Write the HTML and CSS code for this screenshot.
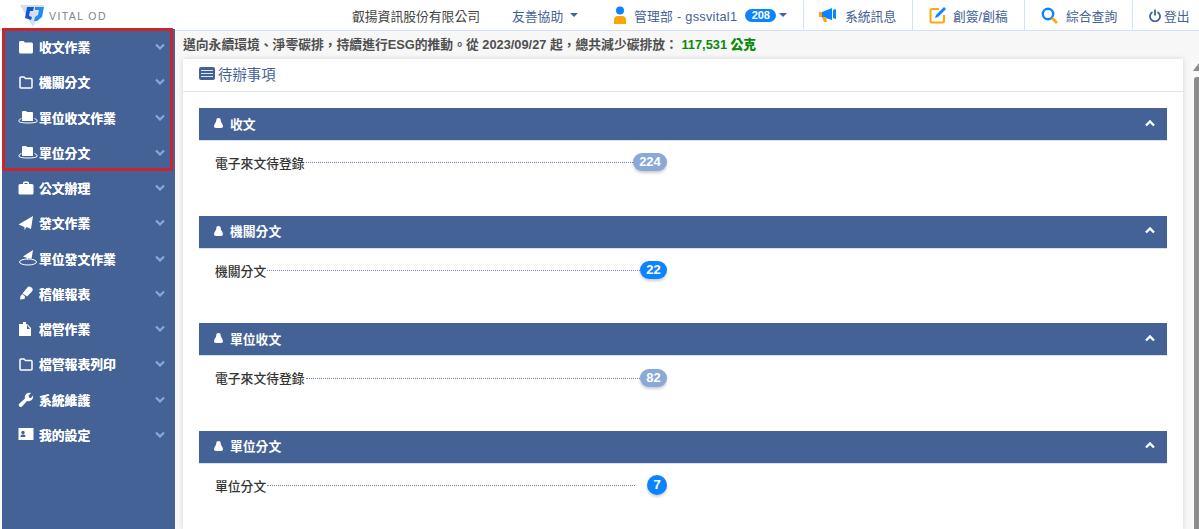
FILE: index.html
```html
<!DOCTYPE html>
<html lang="zh-Hant">
<head>
<meta charset="utf-8">
<title>待辦事項</title>
<link rel="stylesheet" href="styles.css">
</head>
<body>
<header class="top">
  <div class="logo">
    <svg class="logo-mark" width="26" height="26" viewBox="0 0 26 26"><path d="M0 4h24L13 26z" fill="#d8deea"/><path d="M7 6h7l-1 4h-3l-1 5 3 1-1 3-6-2z" fill="#1357d6"/><path d="M15 6h9l-2 10-5 4h-3l1-4 3-2 1-5h-4z" fill="#1f8df0"/></svg>
    <span class="logo-text">VITAL OD</span>
  </div>
  <nav class="top-nav">
    <span class="company">叡揚資訊股份有限公司</span>
    <span class="friendly">友善協助<i class="caret"></i></span>
    <span class="user">
      <svg width="14" height="18" viewBox="0 0 14 18"><circle cx="7" cy="4.500" r="4" fill="#0d84ff"/><path d="M1 18v-4a4 4 0 0 1 4-4h4a4 4 0 0 1 4 4v4z" fill="#ffa50a"/></svg>
      <span class="user-name">管理部 - gssvital1</span>
      <b class="user-count">208</b><i class="caret"></i>
    </span>
    <span class="tool t-msg">
      <svg width="18" height="16" viewBox="0 0 18 16"><path d="M0 5h3v5H0z" fill="#ffa50a"/><path d="M3 5l10-4v12L3 10z" fill="#0d84ff"/><path d="M3 10h4l1 5H5z" fill="#ffa50a"/><path d="M14 3l3-1v10l-3-1z" fill="#0d84ff"/></svg>
      系統訊息
    </span>
    <span class="tool t-edit">
      <svg width="18" height="18" viewBox="0 0 18 18"><path d="M10 3H3a1.500 1.500 0 0 0-1.500 1.500V15A1.500 1.500 0 0 0 3 16.500h10.500A1.500 1.500 0 0 0 15 15V9" fill="none" stroke="#ffa50a" stroke-width="2"/><path d="M6 12l1-3 8-8 2 2-8 8z" fill="#0d84ff"/></svg>
      創簽/創稿
    </span>
    <span class="tool t-search">
      <svg width="17" height="17" viewBox="0 0 17 17"><circle cx="7" cy="7" r="5.200" fill="none" stroke="#0d84ff" stroke-width="2.400"/><path d="M11 11l5 5" stroke="#ffa50a" stroke-width="2.600"/></svg>
      綜合查詢
    </span>
    <span class="tool t-out">
      <svg width="12" height="13" viewBox="0 0 12 13"><path d="M3.500 3a5 5 0 1 0 5 0" fill="none" stroke="#456297" stroke-width="1.800"/><path d="M6 0.500v6" stroke="#456297" stroke-width="1.800"/></svg>
      登出
    </span>
  </nav>
</header>
<div class="body">
  <aside class="side">
    <a class="side-item"><svg class="ic" viewBox="0 0 16 16"><use href="#folder"/></svg><span>收文作業</span><svg class="chev" viewBox="0 0 10 7"><use href="#down"/></svg></a>
    <a class="side-item"><svg class="ic" viewBox="0 0 16 16"><use href="#folder-o"/></svg><span>機關分文</span><svg class="chev" viewBox="0 0 10 7"><use href="#down"/></svg></a>
    <a class="side-item"><svg class="ic wide" viewBox="0 0 20 16"><use href="#hatfolder"/></svg><span>單位收文作業</span><svg class="chev" viewBox="0 0 10 7"><use href="#down"/></svg></a>
    <a class="side-item"><svg class="ic wide" viewBox="0 0 20 16"><use href="#hatfolder"/></svg><span>單位分文</span><svg class="chev" viewBox="0 0 10 7"><use href="#down"/></svg></a>
    <a class="side-item"><svg class="ic" viewBox="0 0 16 16"><path d="M5 4V3a1.500 1.500 0 0 1 1.500-1.500h3A1.500 1.500 0 0 1 11 3v1h3a1.500 1.500 0 0 1 1.500 1.500V13a1.500 1.500 0 0 1-1.500 1.500H2A1.500 1.500 0 0 1 .5 13V5.500A1.500 1.500 0 0 1 2 4zM6.500 4h3V3h-3z" fill="#fff" fill-rule="evenodd"/></svg><span>公文辦理</span><svg class="chev" viewBox="0 0 10 7"><use href="#down"/></svg></a>
    <a class="side-item"><svg class="ic" viewBox="0 0 16 16"><path d="M15 1L13 14 8.500 12 6.500 15V12L0.500 9.500z" fill="#fff"/></svg><span>發文作業</span><svg class="chev" viewBox="0 0 10 7"><use href="#down"/></svg></a>
    <a class="side-item"><svg class="ic wide" viewBox="0 0 20 16"><path d="M15 0L13.500 9 10.500 8 9 10V8L5 6.500z" fill="#fff"/><ellipse cx="10" cy="12" rx="8.500" ry="3" fill="none" stroke="#fff"/></svg><span>單位發文作業</span><svg class="chev" viewBox="0 0 10 7"><use href="#down"/></svg></a>
    <a class="side-item"><svg class="ic" viewBox="0 0 16 16"><path d="M4.500 8.500L9 3a3 3 0 0 1 5 3.500L9 11.500zM2.500 11l2-2 2.500 2.500-.5 2.500-4.500.5z" fill="#fff"/></svg><span>稽催報表</span><svg class="chev" viewBox="0 0 10 7"><use href="#down"/></svg></a>
    <a class="side-item"><svg class="ic" viewBox="0 0 16 16"><path d="M1 3h4V1h3v2h1l4 4v8H1z" fill="#fff"/><path d="M9 4v4h3z" fill="#456297"/></svg><span>檔管作業</span><svg class="chev" viewBox="0 0 10 7"><use href="#down"/></svg></a>
    <a class="side-item"><svg class="ic" viewBox="0 0 16 16"><use href="#folder-o"/></svg><span>檔管報表列印</span><svg class="chev" viewBox="0 0 10 7"><use href="#down"/></svg></a>
    <a class="side-item"><svg class="ic" viewBox="0 0 16 16"><path d="M1.500 12.500L7 7.500C6 4 9 1 13 2L10.500 4.500l.5 2 2 .5L15 4.500c1 4-2.500 6.500-6 5.500l-5 5.500a1.700 1.700 0 0 1-2.500-3z" fill="#fff"/></svg><span>系統維護</span><svg class="chev" viewBox="0 0 10 7"><use href="#down"/></svg></a>
    <a class="side-item"><svg class="ic" viewBox="0 0 16 16"><path d="M0.500 2h15v12H0.500z" fill="#fff"/><circle cx="5" cy="6.500" r="1.700" fill="#456297"/><path d="M2.500 11c0-2 1-2.500 2.500-2.500S7.500 9 7.500 11z" fill="#456297"/></svg><span>我的設定</span><svg class="chev" viewBox="0 0 10 7"><use href="#down"/></svg></a>
  </aside>
  <div class="red-frame"></div>
  <main class="main">
    <p class="banner">邁向永續環境、淨零碳排，持續進行ESG的推動。從 2023/09/27 起，總共減少碳排放： <b class="carbon">117,531 公克</b></p>
    <section class="card">
      <h1 class="card-title">
        <svg width="16" height="13" viewBox="0 0 16 13"><rect width="16" height="13" rx="2" fill="#456297"/><path d="M2 3.500h12M2 6.500h12M2 9.500h12" stroke="#dfe6f2" stroke-width="1"/></svg>
        待辦事項
      </h1>
      <div class="card-body">
        <div class="group">
          <div class="group-head"><svg class="bell" viewBox="0 0 9 10"><use href="#person"/></svg><span>收文</span><svg class="up" viewBox="0 0 10 7"><use href="#upc"/></svg></div>
          <div class="row"><span>電子來文待登錄</span><i class="dots"></i><b class="badge pale w3">224</b></div>
        </div>
        <div class="group">
          <div class="group-head"><svg class="bell" viewBox="0 0 9 10"><use href="#person"/></svg><span>機關分文</span><svg class="up" viewBox="0 0 10 7"><use href="#upc"/></svg></div>
          <div class="row"><span>機關分文</span><i class="dots"></i><b class="badge blue">22</b></div>
        </div>
        <div class="group">
          <div class="group-head"><svg class="bell" viewBox="0 0 9 10"><use href="#person"/></svg><span>單位收文</span><svg class="up" viewBox="0 0 10 7"><use href="#upc"/></svg></div>
          <div class="row"><span>電子來文待登錄</span><i class="dots"></i><b class="badge pale">82</b></div>
        </div>
        <div class="group">
          <div class="group-head"><svg class="bell" viewBox="0 0 9 10"><use href="#person"/></svg><span>單位分文</span><svg class="up" viewBox="0 0 10 7"><use href="#upc"/></svg></div>
          <div class="row"><span>單位分文</span><i class="dots"></i><b class="badge blue one">7</b></div>
        </div>
      </div>
    </section>
    <div class="scroll"><i class="scroll-arrow"></i><i class="scroll-thumb"></i></div>
  </main>
</div>
<svg class="defs" width="0" height="0">
  <defs>
    <path id="folder" d="M1 3.500A1.500 1.500 0 0 1 2.500 2h3l1.500 1.500h6.500A1.500 1.500 0 0 1 15 5v8a1.500 1.500 0 0 1-1.500 1.500h-11A1.500 1.500 0 0 1 1 13z" fill="#fff"/>
    <path id="folder-o" d="M2 4A1 1 0 0 1 3 3h3l1.500 1.500H13a1 1 0 0 1 1 1V13a1 1 0 0 1-1 1H3a1 1 0 0 1-1-1z" fill="none" stroke="#fff" stroke-width="1.500"/>
    <g id="hatfolder"><path d="M4 3A1 1 0 0 1 5 2h3l1 1h5a1 1 0 0 1 1 1v8H4z" fill="#fff"/><path d="M3.500 9.500C1 10.500 .5 11.500 1 12.500c1 2 17 2 18 0 .5-1 0-2-2.500-3" fill="none" stroke="#fff"/></g>
    <path id="down" d="M1 1.500L5 5.500 9 1.500" fill="none" stroke="#8ea6d3" stroke-width="2.200"/>
    <path id="upc" d="M1 5.500L5 1.500 9 5.500" fill="none" stroke="#fff" stroke-width="2.400"/>
    <path id="person" d="M4.500 0a2.200 2.200 0 0 1 2.200 2.500C6.800 4.500 9 6 9 8.500 9 9.500 8 10 4.500 10S0 9.500 0 8.500C0 6 2.200 4.500 2.300 2.500A2.200 2.200 0 0 1 4.500 0z" fill="#fff"/>
  </defs>
</svg>
</body>
</html>
```
FILE: styles.css
```css
* { box-sizing: border-box; }
html, body { height: 100%; }
body {
  margin: 0;
  overflow: hidden;
  font-family: "Liberation Sans", "Noto Sans CJK TC", sans-serif;
  font-size: 12.8px;
  color: #333;
  background: #fff;
}
.defs { position: absolute; }

.top {
  height: 31px;
  display: flex;
  justify-content: space-between;
  border-bottom: 1px solid #d3e2f6;
  background: #fff;
}
.logo { display: flex; align-items: center; padding-left: 20px; height: 30px; }
.logo-mark { margin-top: -2px; }
.logo-text {
  margin-left: 3px;
  margin-top: 1px;
  font-size: 10.5px;
  letter-spacing: 1.4px;
  color: #7b838e;
}
.top-nav { display: flex; align-items: stretch; height: 30px; }
.top-nav > span { display: flex; align-items: center; color: #456297; white-space: nowrap; }
.company { color: #444 !important; width: 160px; }
.friendly { width: 101px; }
.user { width: 190px; }
.user svg { margin-right: 7px; }
.user-name { color: #456297; letter-spacing: .25px; }
.user-count {
  margin-left: 8px;
  width: 31px;
  height: 13px;
  line-height: 13px;
  border-radius: 7px;
  background: #0d84ff;
  color: #fff;
  text-align: center;
  font-size: 11px;
}
.caret {
  display: inline-block;
  margin-left: 7px;
  border: 4.5px solid transparent;
  border-top: 4.5px solid #456297;
  border-bottom: 0;
}
.user .caret { margin-left: 3px; }
.tool { border-left: 1px solid #d3e2f6; gap: 8px; padding-left: 15px; }
.t-msg { width: 109px; }
.t-edit { width: 112px; padding-left: 16px; gap: 6px; }
.t-search { width: 108px; padding-left: 16px; gap: 8px; }
.t-out { width: 67px; padding-left: 16px; gap: 3px; }

.body { display: flex; height: 498px; position: relative; }

.side {
  width: 173px;
  margin: -2px 0 0 2px;
  flex: none;
  background: #456297;
}
.side-item {
  height: 35.25px;
  display: flex;
  align-items: center;
  padding: 0 10px 0 16px;
  color: #fff;
  font-weight: 700;
}
.ic { width: 16px; height: 16px; flex: none; margin-right: 5px; }
.ic.wide { width: 20px; margin-right: 1px; }
.side-item span { flex: 1; text-shadow: 0 0 .4px #fff; }
.chev { width: 10px; height: 7px; }

.red-frame {
  position: absolute;
  left: 2px;
  top: -3px;
  width: 171px;
  height: 143px;
  border: 3px solid #c9252d;
  pointer-events: none;
}

.main {
  position: relative;
  flex: 1;
  padding: 0 16px 0 8px;
  background: #f7f7f7;
}
.banner {
  margin: 0;
  height: 28px;
  line-height: 28px;
  font-weight: 700;
  color: #4f4f4f;
  white-space: nowrap;
}
.carbon { color: #0a8a0a; }
.card {
  height: 470px;
  width: 1000px;
  background: #fff;
  box-shadow: 0 0 5px rgba(0,0,0,.14);
}
.card-title {
  display: flex;
  align-items: center;
  gap: 3px;
  margin: 0;
  height: 33px;
  padding: 0 0 3px 16px;
  border-bottom: 1px solid #dfe5ec;
  font-size: 14.4px;
  font-weight: 400;
  color: #456297;
}
.card-body { padding: 16.2px 16px 0; }
.group { height: 107.6px; }
.group-head {
  display: flex;
  align-items: center;
  height: 33px;
  padding: 0 12px 2px 15px;
  background: #456297;
  border-bottom: 1px solid #d3e2f6;
  color: #fff;
  font-weight: 700;
}
.bell { width: 9px; height: 10px; margin-right: 7px; }
.group-head span { flex: 1; }
.up { width: 10px; height: 7px; }
.row {
  display: flex;
  align-items: center;
  height: 42.6px;
  padding: 0 500px 0 16px;
  color: #333;
  font-weight: 500;
}
.row > span { flex: none; }
.dots {
  flex: 1;
  height: 1px;
  margin: 1px 0 0 1px;
  border-bottom: 1px dotted #7a86a8;
}
.badge {
  height: 18px;
  line-height: 18px;
  width: 27px;
  border-radius: 9px;
  text-align: center;
  color: #fff;
  font-size: 13px;
  box-shadow: 0 2px 3px rgba(0,0,0,.2);
}
.pale { background: #8aa8d8; }
.blue { background: #0d84ff; }
.w3 { width: 34px; }
.one { width: 20px; height: 20px; line-height: 20px; border-radius: 50%; margin-left: 12px; }

.scroll {
  position: absolute;
  top: 28px;
  right: 0;
  bottom: 0;
  width: 8px;
  background: #fafafa;
  overflow: hidden;
}
.scroll-arrow {
  position: absolute;
  top: 4px;
  right: -6px;
  width: 0;
  border: 6px solid transparent;
  border-bottom: 8px solid #8c8c8c;
  border-top: 0;
}
.scroll-thumb {
  position: absolute;
  top: 18px;
  right: 0;
  bottom: 0;
  width: 5px;
  background: #8c8c8c;
  border-radius: 3px 0 0 0;
}
```
